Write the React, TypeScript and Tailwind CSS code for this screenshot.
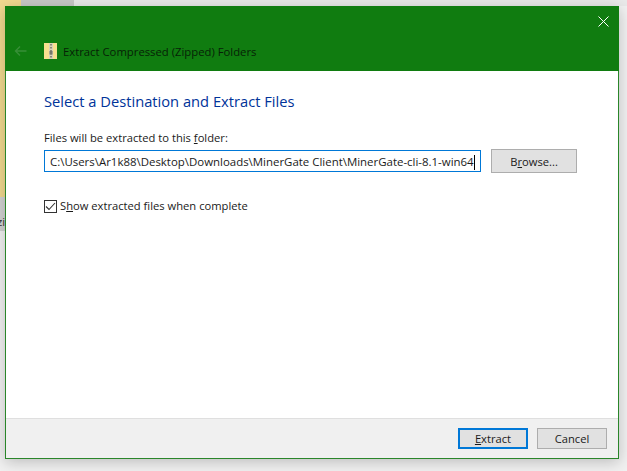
import React from "react";

export default function App() {
  return (
    <div className="relative w-[627px] h-[471px] overflow-hidden bg-[#f1f1f1] font-['Open_Sans','Noto_Sans',sans-serif] text-[11.2px] text-[#1a1a1a]">
      {/* desktop behind the dialog */}
      <div className="flex h-[6px]">
        <div className="w-[21px] bg-[#f1d98f]" />
        <div className="w-[53px] bg-[#c8c8c8]" />
        <div className="flex-1 bg-[#e9e9e9]" />
      </div>
      <div className="absolute left-0 top-0 w-[5px] h-[197px] bg-[#f1d98f]" />
      <div className="absolute left-0 top-[197px] w-[5px] h-[34px] bg-[#d2d2d2] overflow-hidden flex justify-end items-end pb-[2px] leading-[14px] text-[#333]">
        <span className="whitespace-nowrap">zi</span>
      </div>

      {/* dialog window */}
      <div className="absolute left-[5px] top-[6px] w-[614px] h-[453px] flex flex-col border border-[#2a862a] border-t-0 bg-white shadow-[0_3px_14px_rgba(0,0,0,0.22)]">
        <div className="relative h-[65px] shrink-0 bg-[#107c10] -mx-px">
          <svg className="absolute left-[9px] top-[39px]" width="13" height="12" viewBox="0 0 13 12" fill="none" stroke="#378f37" strokeWidth="1.4">
            <path d="M12.5 6H1.5M6 1.5 1.5 6 6 10.5" />
          </svg>
          <svg className="absolute left-[39px] top-[37px]" width="13" height="16" viewBox="0 0 13 16">
            <rect x="0" y="0" width="13" height="16" fill="#f7e08f" />
            <rect x="5" y="0" width="4" height="16" fill="#d8d2b8" />
            <path d="M7 1v14" stroke="#6b6b5c" strokeWidth="1.4" strokeDasharray="1.5 1.5" />
            <rect x="5.5" y="8" width="3" height="3.5" fill="#77776a" />
          </svg>
          <div className="absolute left-[58px] top-[37px] leading-[18px] text-[11.3px] text-[#071f07] whitespace-nowrap">
            Extract Compressed (Zipped) Folders
          </div>
          <svg className="absolute right-[10px] top-[10px]" width="11" height="11" viewBox="0 0 11 11" stroke="#ffffff" strokeWidth="1">
            <path d="M0.5 0.5 10.5 10.5M10.5 0.5 0.5 10.5" />
          </svg>
        </div>

        <div className="flex-1 pl-[38px] pr-[41px]">
          <h1 className="mt-[19px] text-[14.7px] leading-[22px] font-normal text-[#003399]">
            Select a Destination and Extract Files
          </h1>
          <p className="mt-[18px] leading-[16px]">
            Files will be extracted to this <span className="underline">f</span>older:
          </p>
          <div className="mt-[3px] flex gap-[10px] items-start">
            <div className="mt-px w-[438px] h-[22px] border border-[#0078d7] flex items-center pl-[5px] pt-[2px] text-[11.45px] whitespace-nowrap overflow-hidden">
              <span>C:\Users\Ar1k88\Desktop\Downloads\MinerGate Client\MinerGate-cli-8.1-win64</span>
              <span className="w-px h-[15px] bg-black" />
            </div>
            <button className="w-[86px] h-[24px] border border-[#adadad] bg-[#e1e1e1] pt-[2px]">
              B<span className="underline">r</span>owse...
            </button>
          </div>
          <label className="mt-[25px] flex items-center gap-[3px] leading-[16px]">
            <span className="w-[13px] h-[13px] border border-[#333] bg-white flex items-center justify-center">
              <svg width="11" height="9" viewBox="0 0 11 9" fill="none" stroke="#333" strokeWidth="1.1">
                <path d="M1 4.5 4 7.5 10 1" />
              </svg>
            </span>
            <span>S<span className="underline">h</span>ow extracted files when complete</span>
          </label>
        </div>

        <div className="h-[40px] shrink-0 border-t border-[#dfdfdf] bg-[#f0f0f0] flex items-start justify-end gap-[9px] pt-[9px] pr-[11px]">
          <button className="w-[70px] h-[21px] border-2 border-[#0078d7] bg-[#e1e1e1] leading-[16px]">
            <span className="underline">E</span>xtract
          </button>
          <button className="w-[70px] h-[21px] border border-[#adadad] bg-[#e1e1e1] leading-[16px]">Cancel</button>
        </div>
      </div>
    </div>
  );
}
